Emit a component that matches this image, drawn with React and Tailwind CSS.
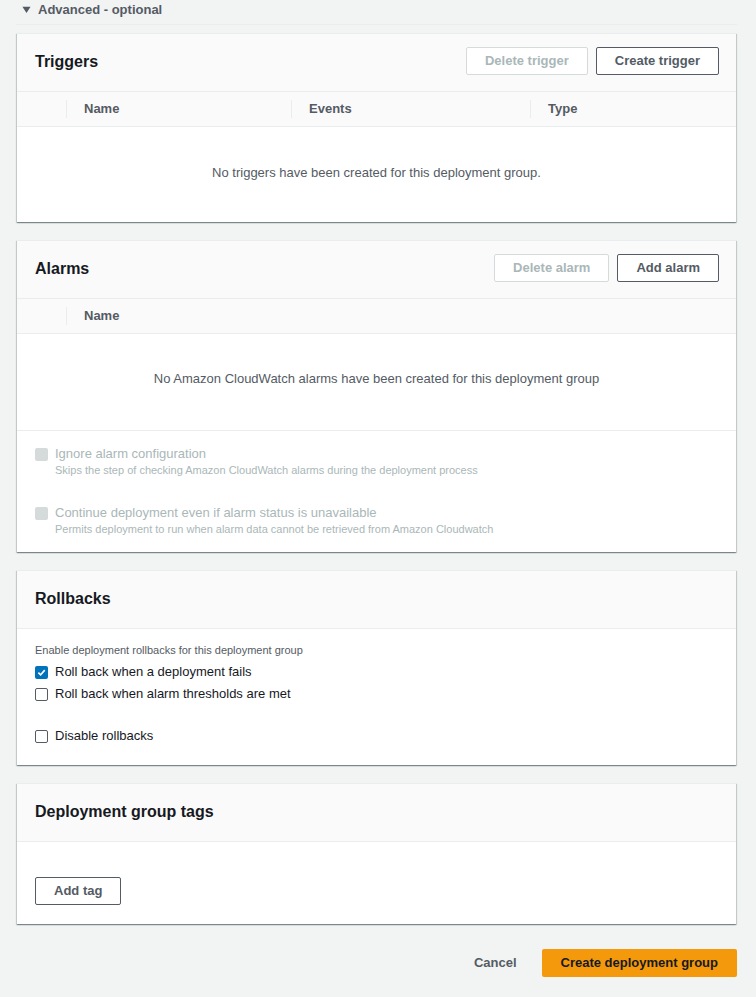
import React from 'react';

const font = { fontFamily: '"Liberation Sans", Arial, sans-serif' };

function Button({ children, disabled }) {
  return (
    <button
      className={
        disabled
          ? 'h-[28px] rounded-[2px] border border-[#d5dbdb] bg-white px-[18px] text-[13px] font-bold text-[#aab7b8]'
          : 'h-[28px] rounded-[2px] border border-[#545b64] bg-white px-[18px] text-[13px] font-bold text-[#545b64]'
      }
    >
      {children}
    </button>
  );
}

function Card({ title, actions, children }) {
  return (
    <div className="mx-[1px] border-t border-[#eaeded] bg-white shadow-[0_1px_1px_0_rgba(0,28,36,0.3),1px_1px_1px_0_rgba(0,28,36,0.15),-1px_1px_1px_0_rgba(0,28,36,0.15)]">
      <div className="flex h-[58px] items-center justify-between border-b border-[#eaeded] bg-[#fafafa] pb-[3px] pl-[18px] pr-[17px]">
        <h2 className="mt-[2px] text-[16px] font-bold text-[#16191f]">{title}</h2>
        {actions && <div className="flex gap-2">{actions}</div>}
      </div>
      {children}
    </div>
  );
}

function TableHead({ cols }) {
  return (
    <div className="flex h-[35px] items-center border-b border-[#eaeded] bg-[#fafafa] text-[13px] font-bold text-[#545b64]">
      <div className="w-[49px]" />
      {cols.map((c) => (
        <div key={c.label} className={`flex items-center ${c.w}`}>
          <span className="h-[18px] w-px bg-[#eaeded]" />
          <span className="pl-[17px]">{c.label}</span>
        </div>
      ))}
    </div>
  );
}

function Check({ checked, disabled, label, desc }) {
  let box = 'h-[13px] w-[13px] shrink-0 rounded-[2px] border border-[#545b64] bg-white';
  if (checked) box = 'flex h-[13px] w-[13px] shrink-0 items-center justify-center rounded-[2px] bg-[#0073bb]';
  if (disabled) box = 'h-[13px] w-[13px] shrink-0 rounded-[2px] bg-[#d5dbdb]';
  return (
    <div className="flex items-start gap-[7px]">
      <span className={`${box} mt-[3px]`}>
        {checked && (
          <svg viewBox="0 0 10 10" className="h-[9px] w-[9px]">
            <path d="M1.5 5.2 L4 7.6 L8.6 2.4" fill="none" stroke="white" strokeWidth="1.8" />
          </svg>
        )}
      </span>
      <div>
        <div className={`text-[13px] leading-[18px] ${disabled ? 'text-[#aab7b8]' : 'text-[#16191f]'}`}>{label}</div>
        {desc && <div className="-mt-[1px] text-[11px] leading-[16px] text-[#aab7b8]">{desc}</div>}
      </div>
    </div>
  );
}

export default function App() {
  return (
    <div className="min-h-[997px] bg-[#f2f3f3] pb-[20px]" style={font}>
      <div className="ml-4 w-[721px]">
        <div className="flex h-[25px] items-start border-b border-[#eaeded] pl-[6px]">
          <div className="flex items-center gap-[7px]">
            <svg viewBox="0 0 10 10" className="h-[9px] w-[9px]">
              <path d="M0.5 2 L9.5 2 L5 9 Z" fill="#545b64" />
            </svg>
            <span className="text-[13px] font-bold text-[#545b64]">Advanced - optional</span>
          </div>
        </div>

        <div className="mt-[8px] flex flex-col gap-[18px]">
          <Card
            title="Triggers"
            actions={
              <>
                <Button disabled>Delete trigger</Button>
                <Button>Create trigger</Button>
              </>
            }
          >
            <TableHead
              cols={[
                { label: 'Name', w: 'w-[225px]' },
                { label: 'Events', w: 'w-[239px]' },
                { label: 'Type', w: 'flex-1' },
              ]}
            />
            <div className="flex h-[95px] items-center justify-center pb-[4px] text-[13px] text-[#545b64]">
              No triggers have been created for this deployment group.
            </div>
          </Card>

          <Card
            title="Alarms"
            actions={
              <>
                <Button disabled>Delete alarm</Button>
                <Button>Add alarm</Button>
              </>
            }
          >
            <TableHead cols={[{ label: 'Name', w: 'flex-1' }]} />
            <div className="flex h-[97px] items-center justify-center border-b border-[#eaeded] pb-[6px] text-[13px] text-[#545b64]">
              No Amazon CloudWatch alarms have been created for this deployment group
            </div>
            <div className="flex flex-col gap-[26px] px-[18px] pb-[15px] pt-[14px]">
              <Check
                disabled
                label="Ignore alarm configuration"
                desc="Skips the step of checking Amazon CloudWatch alarms during the deployment process"
              />
              <Check
                disabled
                label="Continue deployment even if alarm status is unavailable"
                desc="Permits deployment to run when alarm data cannot be retrieved from Amazon Cloudwatch"
              />
            </div>
          </Card>

          <Card title="Rollbacks">
            <div className="px-[18px] pb-[20px] pt-[13px]">
              <div className="text-[11px] leading-[16px] text-[#545b64]">
                Enable deployment rollbacks for this deployment group
              </div>
              <div className="mt-[5px] flex flex-col gap-[4px]">
                <Check checked label="Roll back when a deployment fails" />
                <Check label="Roll back when alarm thresholds are met" />
              </div>
              <div className="mt-[24px]">
                <Check label="Disable rollbacks" />
              </div>
            </div>
          </Card>

          <Card title="Deployment group tags">
            <div className="px-[18px] pb-[19px] pt-[35px]">
              <Button>Add tag</Button>
            </div>
          </Card>
        </div>

        <div className="mt-[25px] flex justify-end gap-[7px]">
          <button className="h-[28px] px-[18px] text-[13px] font-bold text-[#545b64]">Cancel</button>
          <button className="h-[28px] rounded-[2px] bg-[#f5990c] px-[19px] text-[13px] font-bold text-[#16191f]">
            Create deployment group
          </button>
        </div>
      </div>
    </div>
  );
}
